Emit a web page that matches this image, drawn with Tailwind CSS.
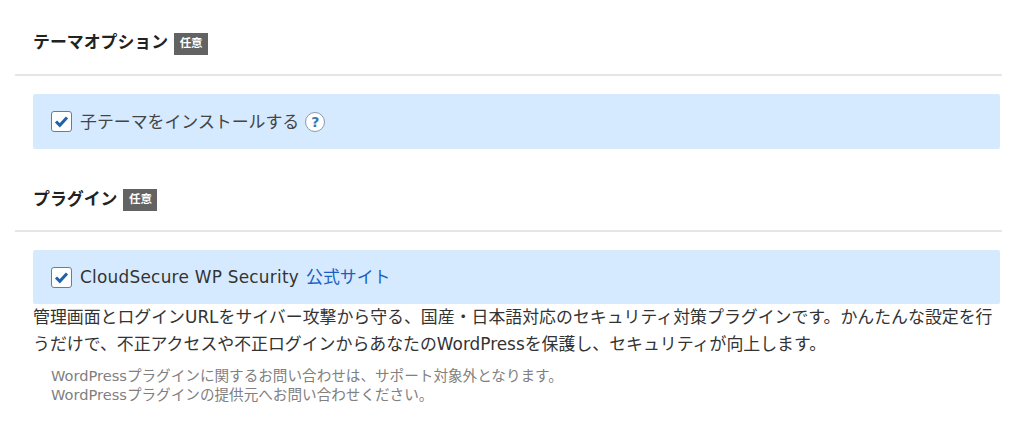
<!DOCTYPE html>
<html><head><meta charset="utf-8"><script src="https://cdn.jsdelivr.net/npm/@tailwindcss/browser@4"></script></head>
<body class="bg-white">
<div class="w-[1024px] h-[447px] overflow-hidden bg-white text-[#333] font-['DejaVu_Sans','Noto_Sans_CJK_JP',sans-serif]">
<div class="mx-[15px] w-[987px]">
<div class="h-[76px] border-b-2 border-[#e6e6e6] pl-[18px] pt-[30px] flex items-start gap-[6px]">
<span class="text-[16.9px] leading-[24px] font-bold text-[#222]">テーマオプション</span>
<span class="mt-[3px] h-[22px] w-[34px] bg-[#636363] text-white text-[11.5px] font-bold flex items-center justify-center">任意</span>
</div>
<div class="mx-[18px] mt-[18px] h-[55px] w-[967px] rounded-[2px] bg-[#d6eaff] flex items-center pl-[18px]">
<span class="w-[21px] h-[21px] rounded-[3px] border border-[#6f7c87] bg-white flex items-center justify-center"><svg width="17" height="17" viewBox="0 0 17 17"><path d="M3 8.5l3.8 3.8L14 4.4" fill="none" stroke="#1f62a8" stroke-width="3"/></svg></span>
<span class="ml-[8px] text-[16.9px] leading-[24px] text-[#444]">子テーマをインストールする</span>
<span class="ml-[6px] mt-[1px] w-[20px] h-[20px] rounded-full border-[1.5px] border-[#8c9aa8] bg-white text-[#3f77ad] text-[14px] font-bold flex items-center justify-center">?</span>
</div>
<div class="h-[83px] border-b-2 border-[#e6e6e6] pl-[18px] pt-[38px] flex items-start gap-[6px]">
<span class="text-[16.9px] leading-[24px] font-bold text-[#222]">プラグイン</span>
<span class="mt-[2px] h-[22px] w-[34px] bg-[#636363] text-white text-[11.5px] font-bold flex items-center justify-center">任意</span>
</div>
<div class="mx-[18px] mt-[18px] h-[54px] w-[967px] rounded-[2px] bg-[#d6eaff] flex items-center pl-[18px]">
<span class="w-[21px] h-[21px] rounded-[3px] border border-[#6f7c87] bg-white flex items-center justify-center"><svg width="17" height="17" viewBox="0 0 17 17"><path d="M3 8.5l3.8 3.8L14 4.4" fill="none" stroke="#1f62a8" stroke-width="3"/></svg></span>
<span class="ml-[8px] text-[16.9px] leading-[24px] text-[#333] flex gap-[7px]"><span class="tracking-[0.25px]">CloudSecure WP Security</span><span class="text-[#1a5fc4]">公式サイト</span></span>
</div>
<p class="mx-[18px] w-[967px] text-[16.9px] leading-[27px] text-[#333]">管理画面とログインURLをサイバー攻撃から守る、国産・日本語対応のセキュリティ対策プラグインです。かんたんな設定を行うだけで、不正アクセスや不正ログインからあなたのWordPressを保護し、セキュリティが向上します。</p>
<p class="ml-[36px] mt-[8px] text-[14.6px] leading-[19px] text-[#808080]">WordPressプラグインに関するお問い合わせは、サポート対象外となります。<br>WordPressプラグインの提供元へお問い合わせください。</p>
</div></div>
</body></html>
